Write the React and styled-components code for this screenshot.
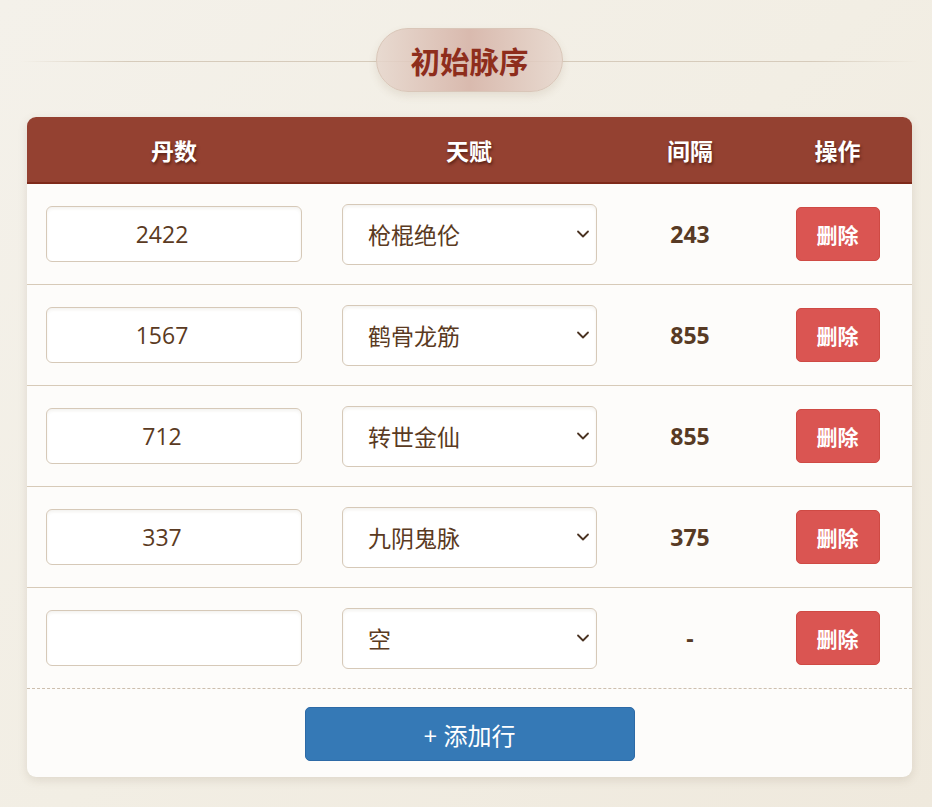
import React, { useState } from "react";
import styled, { createGlobalStyle } from "styled-components";

const GlobalStyle = createGlobalStyle`
  html, body {
    margin: 0;
    padding: 0;
  }
  body {
    background: linear-gradient(135deg, #f4f1ea 0%, #f2eee4 50%, #efe9dd 100%);
    font-family: "Open Sans", "Noto Sans CJK SC", sans-serif;
    min-height: 807px;
  }
`;

const Page = styled.div`
  padding: 28px 20px 30px 27px;
  width: 885px;
`;

const TitleRow = styled.div`
  position: relative;
  display: flex;
  justify-content: center;
  margin: 0 -7px 25px;
  &::before {
    content: "";
    position: absolute;
    left: 0;
    right: 0;
    top: 33px;
    height: 1px;
    background: linear-gradient(90deg, rgba(205,190,170,0) 0%, #d6cbbb 12%, #d6cbbb 88%, rgba(205,190,170,0) 100%);
  }
`;

const TitlePill = styled.h2`
  position: relative;
  margin: 0;
  width: 187px;
  height: 64px;
  box-sizing: border-box;
  border-radius: 32px;
  border: 1px solid #d9c6b8;
  background: linear-gradient(90deg, rgba(230,214,204,0.85) 0%, rgba(214,180,168,0.9) 50%, rgba(230,214,204,0.85) 100%);
  box-shadow: 0 4px 8px rgba(120, 90, 60, 0.12);
  display: flex;
  align-items: center;
  justify-content: center;
  font-family: "Noto Sans CJK SC", sans-serif;
  font-weight: 700;
  font-size: 29.5px;
  color: #8e2d1c;
`;

const Card = styled.div`
  background: #fdfcfa;
  border-radius: 9px;
  overflow: hidden;
  box-shadow: 0 3px 10px rgba(110, 90, 60, 0.15);
`;

const Grid = styled.div`
  display: grid;
  grid-template-columns: 294px 296px 146px 1fr;
`;

const HeadRow = styled(Grid)`
  height: 65px;
  background: #944131;
  border-bottom: 2px solid #7e2a1a;
`;

const HeadCell = styled.div`
  display: flex;
  align-items: center;
  justify-content: center;
  color: #fff;
  font-family: "Noto Sans CJK SC", sans-serif;
  font-weight: 700;
  font-size: 23px;
  text-shadow: 1px 2px 3px rgba(40, 10, 0, 0.55);
`;

const Row = styled(Grid)`
  height: 100px;
  border-bottom: ${(p) => (p.$last ? "1px dashed #cdbfae" : "1px solid #d7cab8")};
`;

const Cell = styled.div`
  display: flex;
  align-items: center;
  justify-content: ${(p) => p.$justify || "center"};
`;

const NumInput = styled.input`
  width: 256px;
  height: 56px;
  box-sizing: border-box;
  margin-left: 19px;
  padding: 0 24px 0 0;
  border: 1px solid #d6c9b8;
  border-radius: 6px;
  background: #fff;
  box-shadow: inset 0 2px 3px rgba(120, 100, 70, 0.08);
  text-align: center;
  font-family: "Open Sans", "Noto Sans CJK SC", sans-serif;
  font-size: 23px;
  color: #5a3a22;
  outline: none;
`;

const SelectWrap = styled.div`
  position: relative;
  margin-left: 21px;
  width: 255px;
  height: 61px;
`;

const Select = styled.select`
  appearance: none;
  width: 100%;
  height: 100%;
  box-sizing: border-box;
  border: 1px solid #d6c9b8;
  border-radius: 6px;
  background: #fff;
  box-shadow: inset 0 2px 3px rgba(120, 100, 70, 0.08);
  padding: 0 40px 0 25px;
  font-family: "Noto Sans CJK SC", sans-serif;
  font-size: 23px;
  color: #5a3a22;
  outline: none;
`;

const Chevron = styled.svg`
  position: absolute;
  right: 7px;
  top: 50%;
  transform: translateY(-50%);
  pointer-events: none;
`;

const Interval = styled.span`
  font-family: "Open Sans", sans-serif;
  font-weight: 700;
  font-size: 23px;
  color: #573a24;
`;

const DeleteButton = styled.button`
  width: 84px;
  height: 54px;
  border: 1px solid #cf4a44;
  border-radius: 5px;
  background: #da5552;
  color: #fff;
  font-family: "Noto Sans CJK SC", sans-serif;
  font-weight: 700;
  font-size: 21px;
  cursor: pointer;
`;

const Footer = styled.div`
  display: flex;
  justify-content: center;
  padding: 18px 0 16px;
`;

const AddButton = styled.button`
  width: 330px;
  height: 54px;
  border: 1px solid #2d6aa6;
  border-radius: 5px;
  background: #3579b6;
  color: #fff;
  font-family: "Open Sans", "Noto Sans CJK SC", sans-serif;
  font-size: 24px;
  cursor: pointer;
`;

const talents = ["空", "枪棍绝伦", "鹤骨龙筋", "转世金仙", "九阴鬼脉"];

const initialRows = [
  { dan: "2422", talent: "枪棍绝伦", gap: "243" },
  { dan: "1567", talent: "鹤骨龙筋", gap: "855" },
  { dan: "712", talent: "转世金仙", gap: "855" },
  { dan: "337", talent: "九阴鬼脉", gap: "375" },
  { dan: "", talent: "空", gap: "-" },
];

export default function App() {
  const [rows, setRows] = useState(initialRows);

  const update = (i, key, val) =>
    setRows((r) => r.map((row, j) => (j === i ? { ...row, [key]: val } : row)));

  return (
    <>
      <GlobalStyle />
      <Page>
        <TitleRow>
          <TitlePill>初始脉序</TitlePill>
        </TitleRow>
        <Card>
          <HeadRow>
            <HeadCell>丹数</HeadCell>
            <HeadCell>天赋</HeadCell>
            <HeadCell>间隔</HeadCell>
            <HeadCell>操作</HeadCell>
          </HeadRow>
          {rows.map((row, i) => (
            <Row key={i} $last={i === rows.length - 1}>
              <Cell $justify="flex-start">
                <NumInput value={row.dan} onChange={(e) => update(i, "dan", e.target.value)} />
              </Cell>
              <Cell $justify="flex-start">
                <SelectWrap>
                  <Select value={row.talent} onChange={(e) => update(i, "talent", e.target.value)}>
                    {talents.map((t) => (
                      <option key={t} value={t}>{t}</option>
                    ))}
                  </Select>
                  <Chevron width="14" height="14" viewBox="0 0 14 14">
                    <path d="M2 4.5 L7 9.5 L12 4.5" fill="none" stroke="#4a3322" strokeWidth="1.8" strokeLinecap="round" strokeLinejoin="round" />
                  </Chevron>
                </SelectWrap>
              </Cell>
              <Cell>
                <Interval>{row.gap}</Interval>
              </Cell>
              <Cell>
                <DeleteButton onClick={() => setRows((r) => r.filter((_, j) => j !== i))}>删除</DeleteButton>
              </Cell>
            </Row>
          ))}
          <Footer>
            <AddButton onClick={() => setRows((r) => [...r, { dan: "", talent: "空", gap: "-" }])}>+ 添加行</AddButton>
          </Footer>
        </Card>
      </Page>
    </>
  );
}
